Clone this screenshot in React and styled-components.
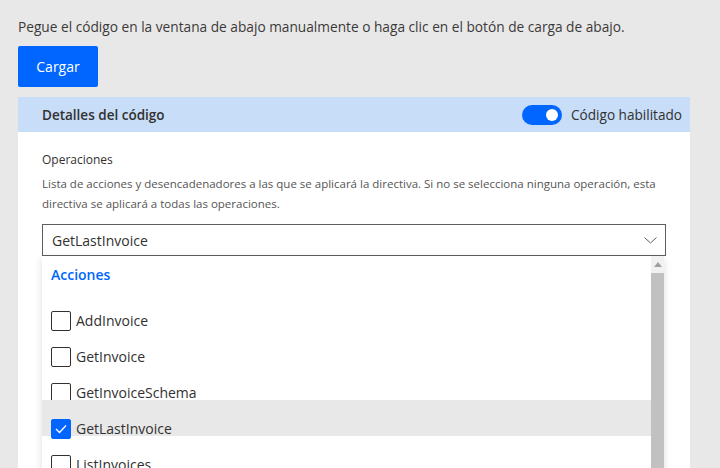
import styled, { createGlobalStyle } from 'styled-components';

const GlobalStyle = createGlobalStyle`
  html, body {
    margin: 0;
    padding: 0;
    overflow: hidden;
    background: #e8e8e8;
    font-family: 'Open Sans', 'Noto Sans', sans-serif;
    color: #323130;
  }
`;

const Page = styled.div`
  display: flex;
  flex-direction: column;
  padding: 17px 30px 0 18px;
`;

const Intro = styled.p`
  margin: 0;
  font-size: 13.7px;
  line-height: 20px;
  color: #3b3a39;
`;

const UploadBtn = styled.button`
  align-self: flex-start;
  flex-shrink: 0;
  width: 80px;
  height: 41px;
  margin-top: 9px;
  border: none;
  border-radius: 2px;
  background: #0066ff;
  color: #fff;
  font-family: inherit;
  font-size: 14px;
  cursor: pointer;
`;

const Panel = styled.section`
  margin-top: 10px;
  background: #fff;
`;

const PanelHeader = styled.div`
  display: flex;
  align-items: center;
  justify-content: space-between;
  height: 35px;
  padding: 0 8px 0 24px;
  background: #c7ddf8;
`;

const PanelTitle = styled.span`
  font-size: 13.5px;
  font-weight: 600;
  color: #323130;
`;

const ToggleWrap = styled.label`
  display: flex;
  align-items: center;
  gap: 9px;
  font-size: 13.6px;
`;

const Track = styled.span`
  position: relative;
  width: 40px;
  height: 20px;
  border-radius: 10px;
  background: ${(p) => (p.on ? '#0066ff' : '#fff')};
`;

const Knob = styled.span`
  position: absolute;
  top: 4px;
  left: ${(p) => (p.on ? '24px' : '4px')};
  width: 12px;
  height: 12px;
  border-radius: 50%;
  background: #fff;
`;

const PanelBody = styled.div`
  padding: 18px 24px 0 24px;
`;

const FieldLabel = styled.div`
  font-size: 12px;
  line-height: 19px;
`;

const FieldHint = styled.div`
  margin-top: 5px;
  font-size: 11.5px;
  line-height: 19.5px;
  color: #555;
`;

const Select = styled.div`
  display: flex;
  align-items: center;
  justify-content: space-between;
  height: 32px;
  margin-top: 11px;
  padding: 0 8px 0 9px;
  box-sizing: border-box;
  border: 1px solid #605e5c;
  font-size: 14px;
`;

const List = styled.div`
  display: flex;
  width: 622px;
  height: 240px;
  background: #fff;
  box-shadow: 0 3px 8px rgba(0, 0, 0, 0.13);
`;

const Options = styled.div`
  flex: 1;
  display: flex;
  flex-direction: column;
`;

const GroupHeader = styled.div`
  display: flex;
  align-items: center;
  height: 36px;
  flex-shrink: 0;
  padding-left: 9px;
  font-size: 14px;
  font-weight: 600;
  color: #0066ff;
`;

const Option = styled.div`
  display: flex;
  align-items: flex-start;
  gap: 5px;
  height: 36px;
  flex-shrink: 0;
  padding: 19px 0 0 9px;
  box-sizing: border-box;
  font-size: 14px;
  line-height: 20px;
  background: ${(p) => (p.active ? '#e8e8e8' : 'transparent')};
`;

const Box = styled.span`
  display: flex;
  align-items: center;
  justify-content: center;
  width: 20px;
  height: 20px;
  flex-shrink: 0;
  box-sizing: border-box;
  border-radius: 2px;
  border: 1px solid ${(p) => (p.checked ? '#0066ff' : '#323130')};
  background: ${(p) => (p.checked ? '#0066ff' : '#fff')};
`;

const Scrollbar = styled.div`
  width: 13px;
  display: flex;
  flex-direction: column;
  background: #f1f1f1;
`;

const ScrollArrow = styled.div`
  display: flex;
  justify-content: center;
  align-items: center;
  height: 17px;
`;

const Thumb = styled.div`
  flex: 1;
  background: #c1c1c1;
`;

const operations = [
  { name: 'AddInvoice' },
  { name: 'GetInvoice' },
  { name: 'GetInvoiceSchema' },
  { name: 'GetLastInvoice', checked: true },
  { name: 'ListInvoices' },
];

const App = () => {
  return (
    <>
      <GlobalStyle />
      <Page>
        <Intro>
          Pegue el código en la ventana de abajo manualmente o haga clic en el
          botón de carga de abajo.
        </Intro>
        <UploadBtn>Cargar</UploadBtn>
        <Panel>
          <PanelHeader>
            <PanelTitle>Detalles del código</PanelTitle>
            <ToggleWrap>
              <Track on>
                <Knob on />
              </Track>
              Código habilitado
            </ToggleWrap>
          </PanelHeader>
          <PanelBody>
            <FieldLabel>Operaciones</FieldLabel>
            <FieldHint>
              Lista de acciones y desencadenadores a las que se aplicará la
              directiva. Si no se selecciona ninguna operación, esta directiva
              se aplicará a todas las operaciones.
            </FieldHint>
            <Select>
              GetLastInvoice
              <svg width="13" height="7" viewBox="0 0 13 7">
                <path d="M0.5 0.5 L6.5 6 L12.5 0.5" fill="none" stroke="#605e5c" strokeWidth="1" />
              </svg>
            </Select>
            <List>
              <Options>
                <GroupHeader>Acciones</GroupHeader>
                {operations.map((op) => (
                  <Option key={op.name} active={op.checked}>
                    <Box checked={op.checked}>
                      {op.checked && (
                        <svg width="12" height="10" viewBox="0 0 12 10">
                          <path d="M1 5 L4.5 8.5 L11 1.5" fill="none" stroke="#fff" strokeWidth="1.3" />
                        </svg>
                      )}
                    </Box>
                    {op.name}
                  </Option>
                ))}
              </Options>
              <Scrollbar>
                <ScrollArrow>
                  <svg width="8" height="5" viewBox="0 0 8 5">
                    <path d="M0 5 L4 0 L8 5 Z" fill="#a0a0a0" />
                  </svg>
                </ScrollArrow>
                <Thumb />
              </Scrollbar>
            </List>
          </PanelBody>
        </Panel>
      </Page>
    </>
  );
};

export default App;
